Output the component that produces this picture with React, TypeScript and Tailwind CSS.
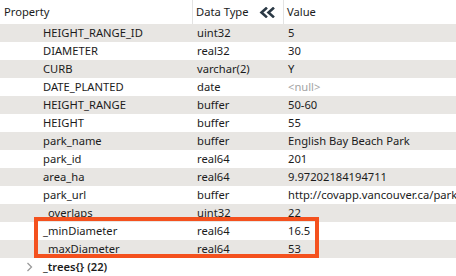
import React from 'react';

type Row = { name: string; type: string; value: string; isNull?: boolean };

const ROWS: Row[] = [
  { name: 'HEIGHT_RANGE_ID', type: 'uint32', value: '5' },
  { name: 'DIAMETER', type: 'real32', value: '30' },
  { name: 'CURB', type: 'varchar(2)', value: 'Y' },
  { name: 'DATE_PLANTED', type: 'date', value: '<null>', isNull: true },
  { name: 'HEIGHT_RANGE', type: 'buffer', value: '50-60' },
  { name: 'HEIGHT', type: 'buffer', value: '55' },
  { name: 'park_name', type: 'buffer', value: 'English Bay Beach Park' },
  { name: 'park_id', type: 'real64', value: '201' },
  { name: 'area_ha', type: 'real64', value: '9.97202184194711' },
  { name: 'park_url', type: 'buffer', value: 'http://covapp.vancouver.ca/parkfinder/parkdetail.aspx' },
  { name: '_overlaps', type: 'uint32', value: '22' },
  { name: '_minDiameter', type: 'real64', value: '16.5' },
  { name: '_maxDiameter', type: 'real64', value: '53' },
];

const App: React.FC = () => {
  return (
    <div className="relative w-[456px] h-[276px] overflow-hidden bg-white text-[11.2px] text-[#1b1b1b] leading-none font-['Noto_Sans','Open_Sans',sans-serif]">
      {/* header */}
      <div className="flex h-6 items-center whitespace-nowrap">
        <div className="w-[193px] shrink-0 pl-1 border-r border-[#e3e3e3] h-full flex items-center">Property</div>
        <div className="w-[91px] shrink-0 pl-[3px] pr-2 border-r border-[#e3e3e3] h-full flex items-center justify-between">
          <span>Data Type</span>
          <svg width="16" height="11" viewBox="0 0 16 11" fill="none" stroke="#2b3945" strokeWidth="2.6" strokeLinecap="square">
            <path d="M7 1.5 L2.5 5.5 L7 9.5" />
            <path d="M14 1.5 L9.5 5.5 L14 9.5" />
          </svg>
        </div>
        <div className="pl-[3px] h-full flex items-center">Value</div>
      </div>

      {/* rows */}
      {ROWS.map((r, i) => (
        <div key={r.name} className={`flex h-[18px] items-center whitespace-nowrap ${i % 2 === 0 ? 'bg-[#e8e6e3]' : 'bg-white'}`}>
          <div className="w-[193px] shrink-0 pl-[43px]">{r.name}</div>
          <div className="w-[91px] shrink-0 pl-1">{r.type}</div>
          <div className={`shrink-0 pl-1 ${r.isNull ? 'text-[#a3a3a3]' : ''}`}>{r.value}</div>
        </div>
      ))}

      <div className="flex h-[18px] items-center whitespace-nowrap">
        <div className="w-[43px] shrink-0 flex justify-end pr-[10px]">
          <svg width="7" height="10" viewBox="0 0 7 10" fill="none" stroke="#9a9a9a" strokeWidth="1.3">
            <path d="M1.5 1 L5.5 5 L1.5 9" />
          </svg>
        </div>
        <div className="font-semibold">_trees{'{}'} (22)</div>
      </div>

      {/* highlight box */}
      <div className="absolute left-[34px] top-[217px] w-[285px] h-[41px] border-4 border-[#f4511e]" />
    </div>
  );
};

export default App;
